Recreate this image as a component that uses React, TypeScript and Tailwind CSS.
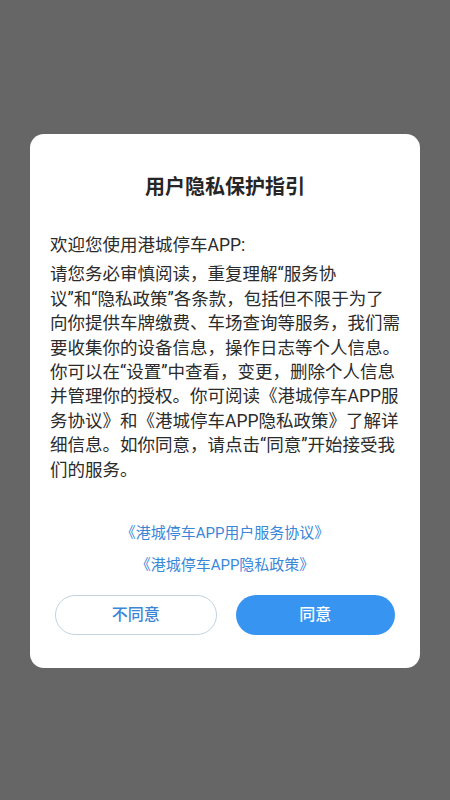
import React from 'react';

const bodyLines = [
  '请您务必审慎阅读，重复理解“服务协',
  '议”和“隐私政策”各条款，包括但不限于为了',
  '向你提供车牌缴费、车场查询等服务，我们需',
  '要收集你的设备信息，操作日志等个人信息。',
  '你可以在“设置”中查看，变更，删除个人信息',
  '并管理你的授权。你可阅读《港城停车APP服',
  '务协议》和《港城停车APP隐私政策》了解详',
  '细信息。如你同意，请点击“同意”开始接受我',
  '们的服务。',
];

const App: React.FC = () => {
  return (
    <div
      className="w-[450px] h-[800px] bg-[#666666] flex flex-col items-center pt-[134px]"
      style={{ fontFamily: 'Roboto, "Noto Sans CJK SC", sans-serif' }}
    >
      <div className="w-[390px] h-[534px] bg-white rounded-[14px] flex flex-col">
        {/* 标题 */}
        <h1 className="pt-[39px] text-center text-[20px] leading-[28px] font-bold text-[#262626]">
          用户隐私保护指引
        </h1>

        {/* 正文 */}
        <div className="mt-[32px] px-[20px] text-[17.5px] leading-[24.4px] text-[#2b2b2b] whitespace-nowrap">
          <p className="mb-[5px]">欢迎您使用港城停车APP:</p>
          {bodyLines.map((line, i) => (
            <p key={i}>{line}</p>
          ))}
        </div>

        {/* 协议链接 */}
        <div className="mt-[39px] flex flex-col items-center gap-[8px] text-[15px] leading-[24px] text-[#3a87d8]">
          <span>《港城停车APP用户服务协议》</span>
          <span>《港城停车APP隐私政策》</span>
        </div>

        {/* 按钮 */}
        <div className="mt-[18px] px-[25px] flex gap-[19px]">
          <button className="flex-1 h-[40px] rounded-full border border-[#c3d3df] bg-white text-[16px] font-medium text-[#3a87d8]">
            不同意
          </button>
          <button className="flex-1 h-[40px] rounded-full bg-[#3794f0] text-[16px] font-medium text-white">
            同意
          </button>
        </div>
      </div>
    </div>
  );
};

export default App;
